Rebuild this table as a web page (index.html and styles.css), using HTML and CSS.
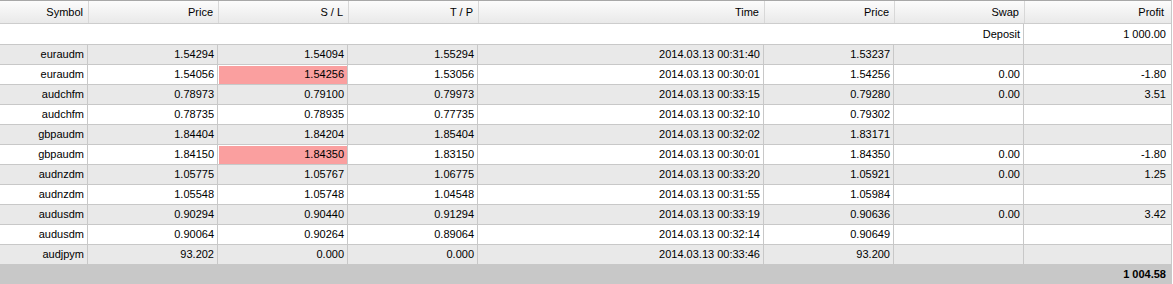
FILE: index.html
```html
<!DOCTYPE html>
<html>
<head>
<meta charset="utf-8">
<link rel="stylesheet" href="styles.css">
</head>
<body>
<div class="grid">
  <div class="head">
    <div class="h">Symbol</div><div class="h">Price</div><div class="h">S / L</div><div class="h">T / P</div><div class="h">Time</div><div class="h">Price</div><div class="h">Swap</div><div class="h">Profit</div>
  </div>
  <div class="row dep">
    <div class="c span7">Deposit</div><div class="c">1 000.00</div>
  </div>
  <div class="row alt">
    <div class="c">euraudm</div><div class="c">1.54294</div><div class="c">1.54094</div><div class="c">1.55294</div><div class="c">2014.03.13 00:31:40</div><div class="c">1.53237</div><div class="c"></div><div class="c"></div>
  </div>
  <div class="row">
    <div class="c">euraudm</div><div class="c">1.54056</div><div class="c hit">1.54256</div><div class="c">1.53056</div><div class="c">2014.03.13 00:30:01</div><div class="c">1.54256</div><div class="c">0.00</div><div class="c">-1.80</div>
  </div>
  <div class="row alt">
    <div class="c">audchfm</div><div class="c">0.78973</div><div class="c">0.79100</div><div class="c">0.79973</div><div class="c">2014.03.13 00:33:15</div><div class="c">0.79280</div><div class="c">0.00</div><div class="c">3.51</div>
  </div>
  <div class="row">
    <div class="c">audchfm</div><div class="c">0.78735</div><div class="c">0.78935</div><div class="c">0.77735</div><div class="c">2014.03.13 00:32:10</div><div class="c">0.79302</div><div class="c"></div><div class="c"></div>
  </div>
  <div class="row alt">
    <div class="c">gbpaudm</div><div class="c">1.84404</div><div class="c">1.84204</div><div class="c">1.85404</div><div class="c">2014.03.13 00:32:02</div><div class="c">1.83171</div><div class="c"></div><div class="c"></div>
  </div>
  <div class="row">
    <div class="c">gbpaudm</div><div class="c">1.84150</div><div class="c hit">1.84350</div><div class="c">1.83150</div><div class="c">2014.03.13 00:30:01</div><div class="c">1.84350</div><div class="c">0.00</div><div class="c">-1.80</div>
  </div>
  <div class="row alt">
    <div class="c">audnzdm</div><div class="c">1.05775</div><div class="c">1.05767</div><div class="c">1.06775</div><div class="c">2014.03.13 00:33:20</div><div class="c">1.05921</div><div class="c">0.00</div><div class="c">1.25</div>
  </div>
  <div class="row">
    <div class="c">audnzdm</div><div class="c">1.05548</div><div class="c">1.05748</div><div class="c">1.04548</div><div class="c">2014.03.13 00:31:55</div><div class="c">1.05984</div><div class="c"></div><div class="c"></div>
  </div>
  <div class="row alt">
    <div class="c">audusdm</div><div class="c">0.90294</div><div class="c">0.90440</div><div class="c">0.91294</div><div class="c">2014.03.13 00:33:19</div><div class="c">0.90636</div><div class="c">0.00</div><div class="c">3.42</div>
  </div>
  <div class="row">
    <div class="c">audusdm</div><div class="c">0.90064</div><div class="c">0.90264</div><div class="c">0.89064</div><div class="c">2014.03.13 00:32:14</div><div class="c">0.90649</div><div class="c"></div><div class="c"></div>
  </div>
  <div class="row alt">
    <div class="c">audjpym</div><div class="c">93.202</div><div class="c">0.000</div><div class="c">0.000</div><div class="c">2014.03.13 00:33:46</div><div class="c">93.200</div><div class="c"></div><div class="c"></div>
  </div>
  <div class="total">1 004.58</div>
</div>
</body>
</html>
```

FILE: styles.css
```css
html, body {
  margin: 0;
  padding: 0;
  background: #ffffff;
}
body {
  font-family: "Liberation Sans", Arial, sans-serif;
  font-size: 11px;
  color: #000000;
}
.grid {
  width: 1171px;
  border-right: 1px solid #c8c8c8;
  display: flex;
  flex-direction: column;
}
.head {
  display: grid;
  grid-template-columns: 89px 130px 130px 130px 286px 130px 130px 146px;
  height: 22px;
  border-top: 1px solid #a8a8a8;
  border-bottom: 1px solid #cdcdcd;
  background: linear-gradient(#fcfcfc, #e9e9e9);
}
.h {
  border-right: 1px solid #d8d8d8;
  text-align: right;
  padding-right: 5px;
  line-height: 22px;
  white-space: nowrap;
}
.h:last-child {
  border-right: none;
  padding-right: 7px;
}
.row {
  display: grid;
  grid-template-columns: 88px 130px 130px 130px 286px 130px 130px 147px;
  height: 19px;
  border-bottom: 1px solid #c8c8c8;
  background: #ffffff;
}
.row.dep {
  height: 20px;
}
.row.alt {
  background: #e9e9e9;
}
.c {
  border-right: 1px solid #c8c8c8;
  text-align: right;
  padding-right: 3px;
  line-height: 19px;
  white-space: nowrap;
}
.dep .c {
  line-height: 20px;
}
.c:last-child {
  border-right: none;
  padding-right: 5px;
}
.span7 {
  grid-column: span 7;
}
.hit {
  background: #fa9f9f;
  box-shadow: inset 1px 1px 0 #ffffff;
}
.total {
  height: 19px;
  line-height: 19px;
  background: #c8c8c8;
  text-align: right;
  padding-right: 5px;
  font-weight: bold;
}
```
